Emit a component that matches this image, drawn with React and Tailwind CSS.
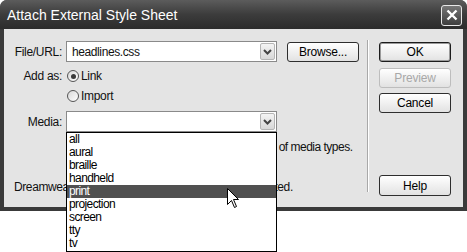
import React from 'react';

const font = { fontFamily: '"Liberation Sans", Arial, sans-serif' };

function Chevron() {
  return (
    <svg width="9" height="6" viewBox="0 0 9 6">
      <path d="M1 1 L4.5 4.5 L8 1" fill="none" stroke="#444" strokeWidth="2" />
    </svg>
  );
}

function Select({ value, className = '' }) {
  return (
    <div className={`flex items-center w-[211px] h-[21px] bg-white border border-[#8a8a8a] pl-[5px] pr-[1px] ${className}`}>
      <span className="flex-1 text-[12px] tracking-[-0.4px]">{value}</span>
      <span className="flex items-center justify-center w-[15px] h-[17px] bg-gradient-to-b from-[#f4f4f4] to-[#d8d8d8] border border-[#b5b5b5] rounded-[2px]">
        <Chevron />
      </span>
    </div>
  );
}

function Button({ children, disabled, primary, className = '' }) {
  return (
    <div
      className={`flex items-center justify-center w-[72px] h-[20px] rounded-[3px] border bg-gradient-to-b from-white to-[#e2e2e2] text-[12px] tracking-[-0.2px] ${
        disabled ? 'border-[#bdbdbd] text-[#a8a8a8]' : primary ? 'border-[#1c1c1c] shadow-[inset_0_0_0_1px_#9a9a9a] text-black' : 'border-[#2e2e2e] text-black'
      } ${className}`}
    >
      {children}
    </div>
  );
}

function Radio({ checked, label }) {
  return (
    <div className="flex items-center h-[16px] gap-[2px]">
      <span className="flex items-center justify-center w-[12px] h-[12px] rounded-full border border-[#555] bg-gradient-to-br from-[#d8d8d8] to-white">
        {checked && <span className="w-[5px] h-[5px] rounded-full bg-[#3a3a3a]" />}
      </span>
      <span className="text-[12px] tracking-[-0.3px]">{label}</span>
    </div>
  );
}

const media = ['all', 'aural', 'braille', 'handheld', 'print', 'projection', 'screen', 'tty', 'tv'];

export default function App() {
  return (
    <div className="relative w-[467px] h-[252px] bg-white overflow-hidden text-[12px] tracking-[-0.3px] text-[#111]" style={font}>
      <div className="flex flex-col w-[467px] h-[211px] bg-[#3a3a3a] rounded-t-[7px]">
        <div className="flex items-center justify-between h-[29px] pl-[7px] pr-[5px] rounded-t-[7px] bg-gradient-to-b from-[#5c5c5c] via-[#3c3c3c] to-[#2c2c2c]">
          <span className="text-white text-[14px] tracking-normal pt-[1px]">Attach External Style Sheet</span>
          <span className="flex items-center justify-center w-[21px] h-[21px] mt-[1px] rounded-[3px] border border-[#e8e8e8] bg-gradient-to-b from-[#777] to-[#3e3e3e]">
            <svg width="12" height="12" viewBox="0 0 12 12">
              <path d="M1.5 1.5 L10.5 10.5 M10.5 1.5 L1.5 10.5" stroke="white" strokeWidth="2.4" />
            </svg>
          </span>
        </div>

        <div className="flex mx-[4px] h-[178px] bg-[#e4e4e4]">
          <div className="flex flex-col w-[363px] pt-[12px]">
            <div className="flex items-center h-[21px]">
              <span className="w-[58px] text-right">File/URL:</span>
              <Select value="headlines.css" className="ml-[4px]" />
              <Button className="ml-[10px] w-[71px]">Browse...</Button>
            </div>
            <div className="flex items-center h-[16px] mt-[6px]">
              <span className="w-[58px] text-right">Add as:</span>
              <span className="ml-[5px]"><Radio checked label="Link" /></span>
            </div>
            <div className="flex items-center h-[16px] mt-[4px] pl-[63px]">
              <Radio label="Import" />
            </div>
            <div className="flex items-center h-[21px] mt-[7px]">
              <span className="w-[58px] text-right">Media:</span>
              <Select value="" className="ml-[4px]" />
            </div>
            <div className="h-[14px] mt-[8px] pl-[62px] whitespace-nowrap leading-[14px] tracking-[-0.5px]">
              You may also enter a comma-separated list of media types.
            </div>
            <div className="h-[14px] mt-[26px] pl-[10px] whitespace-nowrap leading-[14px] tracking-[-0.4px]">
              Dreamweaver's sample style sheets can get you started.
            </div>
          </div>

          <div className="w-[2px] mt-[11px] h-[152px] border-l border-[#a8a8a8] border-r border-r-white" />

          <div className="flex flex-col pl-[10px] pt-[13px]">
            <Button primary>OK</Button>
            <Button disabled className="mt-[6px]">Preview</Button>
            <Button className="mt-[5px]">Cancel</Button>
            <Button className="mt-[62px] h-[21px]">Help</Button>
          </div>
        </div>
      </div>

      <div className="absolute left-[66px] top-[132px] w-[211px] h-[120px] bg-white border border-black flex flex-col">
        {media.map((m) => (
          <div
            key={m}
            className={`h-[13px] leading-[13px] pl-[2px] text-[12px] tracking-[-0.6px] ${m === 'print' ? 'bg-[#505050] text-white' : 'text-black'}`}
          >
            {m}
          </div>
        ))}
      </div>

      <svg className="absolute left-[227px] top-[188px]" width="13" height="21" viewBox="0 0 13 21">
        <path d="M0.5 0.5 L0.5 16.5 L4.5 12.5 L7.5 19.5 L9.5 18.5 L6.5 11.5 L11.5 11.5 Z" fill="white" stroke="black" strokeWidth="1" />
      </svg>
    </div>
  );
}
